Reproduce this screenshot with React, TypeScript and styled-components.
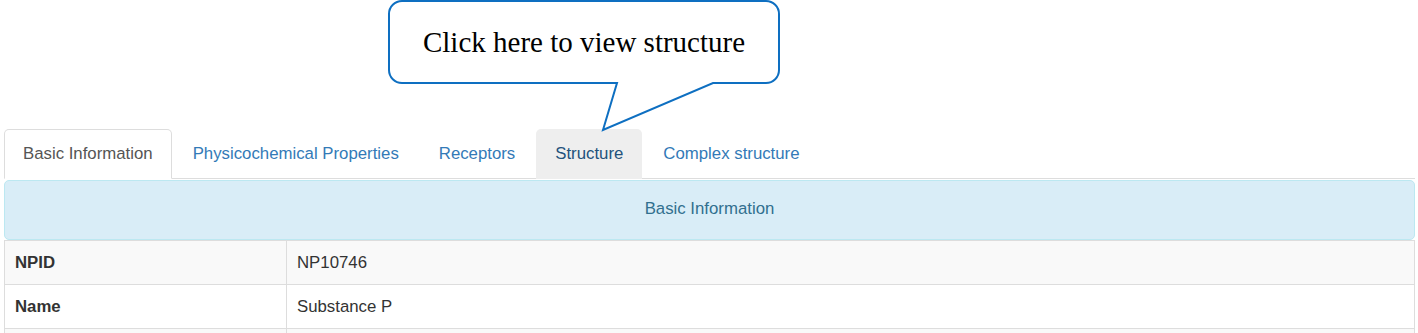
import styled, { createGlobalStyle } from 'styled-components';

const GlobalStyle = createGlobalStyle`
	body {
		margin: 0;
		background: #fff;
		font-family: 'Liberation Sans', Arial, Helvetica, sans-serif;
		font-size: 16.8px;
		color: #333;
	}
`;

const Page = styled.div`
	padding: 0 3px 0 4px;
`;

const Header = styled.div`
	height: 129px;
	padding-top: 1px;
	box-sizing: border-box;
`;

const Callout = styled.div`
	position: relative;
	margin-left: 385px;
	width: 390px;
	height: 82px;
	display: flex;
	align-items: center;
	justify-content: center;
`;

const CalloutShape = styled.svg`
	position: absolute;
	left: -2px;
	top: -2px;
	overflow: visible;
	z-index: 2;
`;

const CalloutText = styled.span`
	position: relative;
	z-index: 3;
	font-family: 'Liberation Serif', 'Times New Roman', serif;
	font-size: 29px;
	color: #000;
	margin-top: 1px;
`;

const Tabs = styled.ul`
	display: flex;
	margin: 0;
	padding: 0;
	list-style: none;
	border-bottom: 1px solid #ddd;
`;

const Tab = styled.li<{ active?: boolean; hover?: boolean }>`
	margin: 0 2px -1px 0;
	padding: 12px 18px;
	line-height: 24px;
	border: 1px solid ${({ active }) => (active ? '#ddd' : 'transparent')};
	border-bottom-color: transparent;
	border-radius: 5px 5px 0 0;
	background: ${({ active, hover }) => (active ? '#fff' : hover ? '#eee' : 'transparent')};
	color: ${({ active, hover }) => (active ? '#555' : hover ? '#23527c' : '#337ab7')};
	cursor: pointer;
	white-space: nowrap;
`;

const InfoHeading = styled.div`
	margin-top: 1px;
	padding: 16px 18px 18px;
	line-height: 24px;
	background: #d9edf7;
	border: 1px solid #bce8f1;
	border-radius: 5px;
	color: #31708f;
	text-align: center;
`;

const Table = styled.table`
	width: 100%;
	border-collapse: collapse;
	border: 1px solid #ddd;
`;

const Row = styled.tr<{ striped?: boolean }>`
	background: ${({ striped }) => (striped ? '#f9f9f9' : '#fff')};
`;

const LabelCell = styled.th`
	width: 261px;
	padding: 10px;
	line-height: 23px;
	border: 1px solid #ddd;
	text-align: left;
	font-weight: bold;
`;

const ValueCell = styled.td`
	padding: 10px;
	line-height: 23px;
	border: 1px solid #ddd;
`;

const tabs = ['Basic Information', 'Physicochemical Properties', 'Receptors', 'Structure', 'Complex structure'];

const rows = [
	{ label: 'NPID', value: 'NP10746' },
	{ label: 'Name', value: 'Substance P' },
	{ label: '', value: '' },
];

const App = () => {
	return (
		<Page>
			<GlobalStyle />
			<Header>
				<Callout>
					<CalloutShape width="394" height="134" viewBox="387 -1 394 134">
						<path
							d="M402 1 H766 A13 13 0 0 1 779 14 V70 A13 13 0 0 1 766 83 H713 L603 130 L617 83 H402 A13 13 0 0 1 389 70 V14 A13 13 0 0 1 402 1 Z"
							fill="#fff"
							stroke="#0e6fc1"
							strokeWidth="2"
						/>
					</CalloutShape>
					<CalloutText>Click here to view structure</CalloutText>
				</Callout>
			</Header>
			<Tabs>
				{tabs.map((t, i) => (
					<Tab key={t} active={i === 0} hover={t === 'Structure'}>
						{t}
					</Tab>
				))}
			</Tabs>
			<InfoHeading>Basic Information</InfoHeading>
			<Table>
				<tbody>
					{rows.map((r, i) => (
						<Row key={i} striped={i % 2 === 0}>
							<LabelCell>{r.label}</LabelCell>
							<ValueCell>{r.value}</ValueCell>
						</Row>
					))}
				</tbody>
			</Table>
		</Page>
	);
};

export default App;
